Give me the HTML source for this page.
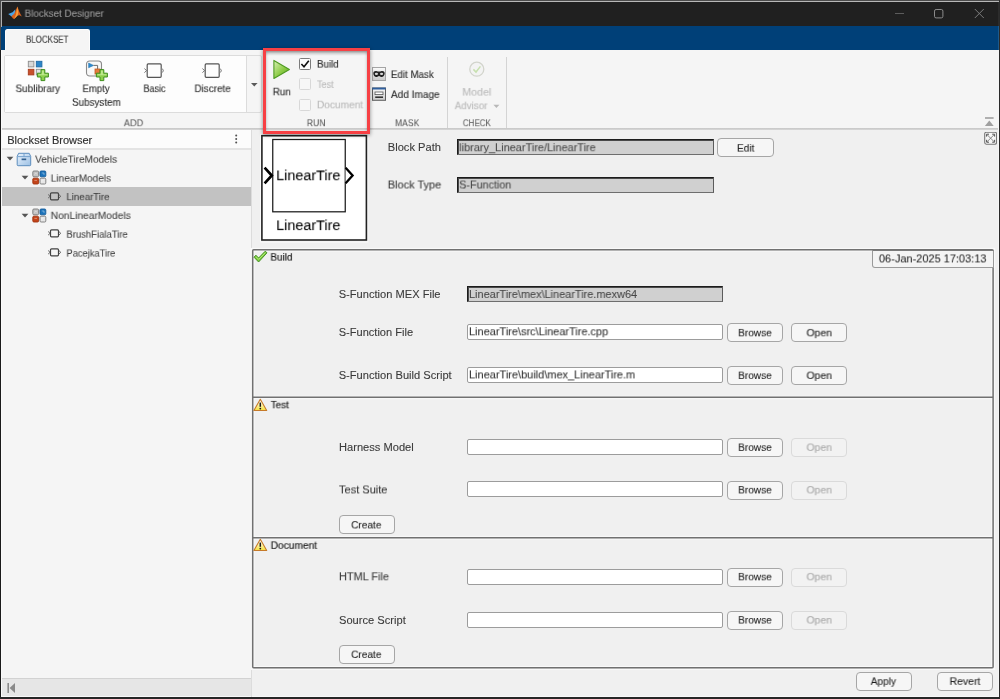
<!DOCTYPE html>
<html lang="en">
<head>
<meta charset="utf-8">
<title>Blockset Designer</title>
<style>
*{box-sizing:border-box;margin:0;padding:0}
html,body{width:1000px;height:699px;overflow:hidden;background:#f0f0f0}
body{font-family:"Liberation Sans",sans-serif;font-size:11px;color:#212121;position:relative}
#win{position:absolute;left:0;top:0;width:1000px;height:699px;overflow:hidden;background:#f0f0f0}
#win div,#win svg,#win span,#win button,#win label{position:absolute}
.x{white-space:nowrap;line-height:14px;height:14px;transform-origin:0 0;display:block;will-change:transform}
#title{left:0;top:0;width:1000px;height:26px;background:#202020}
#band{left:0;top:26px;width:1000px;height:24px;background:#004078}
#tab{left:5px;top:29px;width:85px;height:22px;background:#f5f5f5;border-radius:2.5px 2.5px 0 0;border:1px solid #fdfdfd;border-bottom:0}
#strip{left:0;top:50px;width:1000px;height:79px;background:#f5f5f5}
#stripline{left:0;top:128px;width:1000px;height:2px;background:linear-gradient(#c6c6c6,#d8d8d8)}
.vsep{width:1px;background:#d4d4d4}
.cb{width:12px;height:12px;border:1px solid #7c7c7c;background:#fdfdfd;border-radius:1.5px}
.cb.off{border-color:#d8d8d8;background:#f7f7f7}
#left{left:2px;top:130px;width:249px;height:567px;background:#f5f5f5}
#lhead{left:2px;top:130px;width:249px;height:20px;background:#fcfcfc;border-bottom:2px solid #e4e4e4}
.fld{height:17px;background:#fff;border:1px solid #9c9c9c;border-radius:2px}
.fld.ro{background:#d0d0d0;border:1px solid #1c1c1c;border-right-color:#5c5c5c;border-bottom-color:#6e6e6e;border-radius:0;box-shadow:inset 1px 1px 0 #4a4a4a}
.btn{height:19px;width:56px;background:#f6f6f6;border:1px solid #a6a6a6;border-radius:4px;font:inherit}
.btn.off{border-color:#dadada;background:#f2f2f2}
.pan{border:1px solid #747474;border-left-width:2px;box-shadow:inset 1px 1px 0 #fafafa}
</style>
</head>
<body>
<div id="win">
  <!-- ===== TITLE BAR ===== -->
  <div id="title"></div>
  <svg style="left:8px;top:6px" width="16" height="14" viewBox="0 0 16 14">
    <path d="M0.2 8.0 L4.6 6.2 L7.4 3.2 L7 8.4 L3.6 10.4 Z" fill="#4aa3e6"/>
    <path d="M3.4 10.2 L6.2 7.8 L9.4 0.6 L11.4 6 L13.8 10.6 L11.6 9.2 L9.6 9.6 L6.2 13 L5 12.4 Z" fill="#d9601c"/>
    <path d="M9.4 0.6 L10.2 6.4 L9.6 9.6 L6.2 13 L8 8.4 Z" fill="#f7a13a"/>
  </svg>
  <svg style="left:890px;top:6px" width="100" height="16" viewBox="0 0 100 16">
    <path d="M5 7.5 H14" stroke="#5c5c5c" stroke-width="1" fill="none"/>
    <rect x="44.5" y="3.5" width="8.4" height="8.4" rx="1.6" stroke="#8c8c8c" stroke-width="1" fill="none"/>
    <path d="M84.8 3 L93.8 12 M93.8 3 L84.8 12" stroke="#7c7c7c" stroke-width="1" fill="none"/>
  </svg>
  <div id="band"></div>
  <div id="tab"></div>

  <!-- ===== TOOLSTRIP ===== -->
  <div id="strip"></div>
  <div id="stripline"></div>
  <!-- gallery -->
  <div style="left:4px;top:55px;width:258px;height:58px;border:1px solid #dcdcdc;border-radius:2px;background:#f5f5f5"></div>
  <div style="left:5px;top:56px;width:241px;height:56px;background:#fdfdfd"></div>
  <div class="vsep" style="left:246px;top:56px;height:56px;background:#dcdcdc"></div>
  <svg style="left:250px;top:82px" width="9" height="6" viewBox="0 0 9 6"><path d="M1 1.1 H7.6 L4.3 4.6 Z" fill="#5a5a5a"/></svg>

  <!-- Sublibrary icon -->
  <svg style="left:26px;top:59px" width="26" height="24" viewBox="0 0 26 24">
    <rect x="2.3" y="2.3" width="5.6" height="5.6" fill="#d9d9d9" stroke="#8c8c8c" stroke-width="0.9"/>
    <rect x="10.3" y="2.3" width="5.6" height="5.6" fill="#2d86c8" stroke="#1f6aa6" stroke-width="0.9"/>
    <rect x="2.3" y="10.3" width="5.6" height="5.6" fill="#c8502c" stroke="#a83c1c" stroke-width="0.9"/>
    <rect x="10.3" y="10.3" width="5.6" height="5.6" fill="#e4e4e4" stroke="#8c8c8c" stroke-width="0.9"/>
    <path d="M15 10.6 h3.8 v3.6 h3.6 v3.8 h-3.6 v3.6 h-3.8 v-3.6 h-3.6 v-3.8 h3.6 Z" fill="#8ed04e" stroke="#3f8f1e" stroke-width="1" stroke-linejoin="round"/>
    <path d="M15.9 11.6 h2 v3.6 h3.6 v1 h-9 v-1 h3.4 Z" fill="#c9ee9c" opacity="0.8"/>
  </svg>
  <!-- Empty subsystem icon -->
  <svg style="left:84px;top:59px" width="26" height="24" viewBox="0 0 26 24">
    <rect x="2.5" y="2" width="15" height="15" rx="3.2" fill="#f7f7f7" stroke="#8a8a8a" stroke-width="1.1"/>
    <path d="M4.6 4 L9.6 6.4 L4.6 8.8 Z" fill="#2e8bd0" stroke="#1d6eab" stroke-width="0.5"/>
    <path d="M9.6 6.4 H13.6 V10.4" stroke="#6c6c6c" stroke-width="1" fill="none"/>
    <rect x="11" y="10" width="5" height="5" fill="#e47a3c" stroke="#c05a22" stroke-width="0.8"/>
    <path d="M16 10.6 h3.8 v3.6 h3.6 v3.8 h-3.6 v3.6 h-3.8 v-3.6 h-3.6 v-3.8 h3.6 Z" fill="#8ed04e" stroke="#3f8f1e" stroke-width="1" stroke-linejoin="round"/>
    <path d="M16.9 11.6 h2 v3.6 h3.6 v1 h-9 v-1 h3.4 Z" fill="#c9ee9c" opacity="0.8"/>
  </svg>
  <!-- Basic -->
  <svg style="left:142px;top:61px" width="24" height="18" viewBox="0 0 24 18">
    <rect x="5.2" y="2.9" width="14" height="13.4" rx="1" fill="#fdfdfd" stroke="#555" stroke-width="1.2"/>
    <path d="M2.4 7.6 L4.6 9.6 L2.4 11.6" stroke="#666" stroke-width="0.9" fill="none"/>
    <path d="M19.8 7.6 L22 9.6 L19.8 11.6 Z" stroke="#777" stroke-width="0.8" fill="#fdfdfd"/>
  </svg>
  <!-- Discrete -->
  <svg style="left:200px;top:61px" width="24" height="18" viewBox="0 0 24 18">
    <rect x="5.2" y="2.9" width="14" height="13.4" rx="1" fill="#fdfdfd" stroke="#555" stroke-width="1.2"/>
    <path d="M2.4 7.6 L4.6 9.6 L2.4 11.6" stroke="#666" stroke-width="0.9" fill="none"/>
    <path d="M19.8 7.6 L22 9.6 L19.8 11.6 Z" stroke="#777" stroke-width="0.8" fill="#fdfdfd"/>
  </svg>

  <!-- RUN -->
  <svg style="left:271px;top:58px" width="22" height="24" viewBox="0 0 22 24">
    <defs><linearGradient id="gplay" x1="0" y1="0" x2="1" y2="1">
      <stop offset="0" stop-color="#d9f0b4"/><stop offset="0.55" stop-color="#8ccb45"/><stop offset="1" stop-color="#5da524"/></linearGradient></defs>
    <path d="M2.9 2.4 L18.4 11.4 L2.9 20.4 Z" fill="url(#gplay)" stroke="#4f9a22" stroke-width="1.1" stroke-linejoin="round"/>
  </svg>
  <div class="cb" style="left:299px;top:58px"></div>
  <svg style="left:299px;top:58px" width="12" height="12" viewBox="0 0 12 12"><path d="M2.4 6 L5 8.8 L9.8 2.8" stroke="#111" stroke-width="1.6" fill="none"/></svg>
  <div class="cb off" style="left:299px;top:78px"></div>
  <div class="cb off" style="left:299px;top:99px"></div>

  <!-- MASK -->
  <svg style="left:372px;top:67px" width="14" height="14" viewBox="0 0 14 14">
    <defs><linearGradient id="gm" x1="0" y1="0" x2="0" y2="1"><stop offset="0" stop-color="#fbfbfb"/><stop offset="1" stop-color="#c9c9c9"/></linearGradient></defs>
    <rect x="0.5" y="0.5" width="13" height="13" fill="url(#gm)" stroke="#a4a4a4" stroke-width="1"/>
    <path d="M1.3 6.3 C1.3 4.2 3.2 3.7 5 4.2 C6.3 4.6 7.7 4.6 9 4.2 C10.8 3.7 12.7 4.2 12.7 6.3 C12.7 8.6 11.2 10 9.7 10 C8.4 10 7.9 8.9 7 8.9 C6.1 8.9 5.6 10 4.3 10 C2.8 10 1.3 8.6 1.3 6.3 Z" fill="#222"/>
    <ellipse cx="4.4" cy="6.9" rx="1.6" ry="1.05" fill="#d8d8d8"/>
    <ellipse cx="9.6" cy="6.9" rx="1.6" ry="1.05" fill="#d8d8d8"/>
  </svg>
  <svg style="left:372px;top:87px" width="14" height="14" viewBox="0 0 14 14">
    <rect x="0.5" y="1" width="13" height="12.3" fill="url(#gm)" stroke="#5e5e5e" stroke-width="1"/>
    <rect x="0.3" y="0.6" width="13.4" height="1.9" fill="#2f5f9e"/>
    <rect x="3" y="5" width="8" height="2.6" fill="#fff" stroke="#555" stroke-width="0.8"/>
    <path d="M3.2 10.2 H11" stroke="#2a2a2a" stroke-width="1.5"/>
  </svg>
  <div class="vsep" style="left:447px;top:57px;height:71px"></div>

  <!-- CHECK -->
  <svg style="left:467px;top:60px" width="20" height="20" viewBox="0 0 20 20">
    <circle cx="9.8" cy="9.2" r="7" fill="#f3f3f3" stroke="#d2d4cc" stroke-width="1.3"/>
    <path d="M6.4 9.4 L9 12 L13.4 6.4" stroke="#c6e0ae" stroke-width="1.5" fill="none"/>
  </svg>
  <svg style="left:493px;top:104px" width="7" height="5" viewBox="0 0 7 5"><path d="M0.4 0.8 H6.4 L3.4 4 Z" fill="#b8b8b8"/></svg>
  <div class="vsep" style="left:506px;top:57px;height:71px"></div>
  <svg style="left:984px;top:116px" width="12" height="12" viewBox="0 0 12 12"><path d="M1 2 H9.6" stroke="#929292" stroke-width="1.4"/><path d="M5.3 4.4 L9.7 10 H0.9 Z" fill="#a0a0a0"/></svg>

  <!-- ===== LEFT PANEL ===== -->
  <div id="left"></div>
  <div id="lhead"></div>
  <svg style="left:233px;top:133px" width="6" height="12" viewBox="0 0 6 12"><circle cx="3.2" cy="2.6" r="1" fill="#505050"/><circle cx="3.2" cy="6" r="1" fill="#505050"/><circle cx="3.2" cy="9.4" r="1" fill="#505050"/></svg>
  <div style="left:2px;top:187px;width:249px;height:19px;background:#c2c2c2"></div>
  <!-- row 0 -->
  <svg style="left:6px;top:156px" width="8" height="6" viewBox="0 0 8 6"><path d="M0.6 0.8 H7.4 L4 4.6 Z" fill="#555"/></svg>
  <svg style="left:16px;top:152px" width="16" height="15" viewBox="0 0 16 15">
    <defs><linearGradient id="gpk" x1="0" y1="0" x2="1" y2="1"><stop offset="0" stop-color="#eaf3fc"/><stop offset="1" stop-color="#9cc0e4"/></linearGradient></defs>
    <path d="M2.6 1.3 H13.2 L14.7 4.4 V12.8 Q14.7 13.7 13.8 13.7 H2.1 Q1.2 13.7 1.2 12.8 V4.4 Z" fill="url(#gpk)" stroke="#5c8dbd" stroke-width="1"/>
    <path d="M1.4 4.6 H14.5 M8 1.4 V4.4" stroke="#6d9ccb" stroke-width="0.9"/>
    <rect x="5.6" y="6.5" width="4.6" height="1.7" fill="#34618f"/>
  </svg>
  <!-- row 1 -->
  <svg style="left:21px;top:175px" width="8" height="6" viewBox="0 0 8 6"><path d="M0.6 0.8 H7.4 L4 4.6 Z" fill="#555"/></svg>
  <svg style="left:32px;top:170px" width="15" height="15" viewBox="0 0 15 15">
    <rect x="0.8" y="1" width="5.8" height="5.8" rx="1.1" fill="#c4c4c4" stroke="#787878" stroke-width="0.9"/>
    <rect x="8" y="1" width="5.8" height="5.8" rx="1.1" fill="#1c74bc" stroke="#165c98" stroke-width="0.9"/>
    <rect x="0.8" y="8.2" width="5.8" height="5.8" rx="1.1" fill="#c4441a" stroke="#a03410" stroke-width="0.9"/>
    <rect x="8" y="8.2" width="5.8" height="5.8" rx="1.1" fill="#e6e6e6" stroke="#787878" stroke-width="0.9"/>
    <path d="M2.4 4.4 L3.8 3 L5 4.4 M9.8 3 h2.2 v2 M2.4 10.4 h2.6 M9.8 12.4 v-2.4 h2.2" stroke="#fff" stroke-width="0.7" fill="none" opacity="0.55"/>
  </svg>
  <!-- row 2 -->
  <svg style="left:47px;top:192px" width="15" height="9" viewBox="0 0 15 9">
    <rect x="3.5" y="0.9" width="8" height="6.9" rx="1" fill="none" stroke="#424242" stroke-width="1.2"/>
    <path d="M1.1 2.5 L3.1 4.3 L1.1 6.1" stroke="#5a5a5a" stroke-width="0.9" fill="none"/>
    <path d="M11.8 2.5 L13.8 4.3 L11.8 6.1" stroke="#5a5a5a" stroke-width="0.9" fill="none"/>
  </svg>
  <!-- row 3 -->
  <svg style="left:21px;top:213px" width="8" height="6" viewBox="0 0 8 6"><path d="M0.6 0.8 H7.4 L4 4.6 Z" fill="#555"/></svg>
  <svg style="left:32px;top:208px" width="15" height="15" viewBox="0 0 15 15">
    <rect x="0.8" y="1" width="5.8" height="5.8" rx="1.1" fill="#c4c4c4" stroke="#787878" stroke-width="0.9"/>
    <rect x="8" y="1" width="5.8" height="5.8" rx="1.1" fill="#1c74bc" stroke="#165c98" stroke-width="0.9"/>
    <rect x="0.8" y="8.2" width="5.8" height="5.8" rx="1.1" fill="#c4441a" stroke="#a03410" stroke-width="0.9"/>
    <rect x="8" y="8.2" width="5.8" height="5.8" rx="1.1" fill="#e6e6e6" stroke="#787878" stroke-width="0.9"/>
    <path d="M2.4 4.4 L3.8 3 L5 4.4 M9.8 3 h2.2 v2 M2.4 10.4 h2.6 M9.8 12.4 v-2.4 h2.2" stroke="#fff" stroke-width="0.7" fill="none" opacity="0.55"/>
  </svg>
  <!-- row 4 -->
  <svg style="left:47px;top:229px" width="15" height="9" viewBox="0 0 15 9">
    <rect x="3.5" y="0.9" width="8" height="6.9" rx="1" fill="none" stroke="#424242" stroke-width="1.2"/>
    <path d="M1.1 2.5 L3.1 4.3 L1.1 6.1" stroke="#5a5a5a" stroke-width="0.9" fill="none"/>
    <path d="M11.8 2.5 L13.8 4.3 L11.8 6.1" stroke="#5a5a5a" stroke-width="0.9" fill="none"/>
  </svg>
  <!-- row 5 -->
  <svg style="left:47px;top:248px" width="15" height="9" viewBox="0 0 15 9">
    <rect x="3.5" y="0.9" width="8" height="6.9" rx="1" fill="none" stroke="#424242" stroke-width="1.2"/>
    <path d="M1.1 2.5 L3.1 4.3 L1.1 6.1" stroke="#5a5a5a" stroke-width="0.9" fill="none"/>
    <path d="M11.8 2.5 L13.8 4.3 L11.8 6.1" stroke="#5a5a5a" stroke-width="0.9" fill="none"/>
  </svg>
  <!-- bottom strip -->
  <div style="left:2px;top:678px;width:249px;height:1px;background:#d2d2d2"></div>
  <div style="left:2px;top:679px;width:249px;height:17px;background:#e6e6e6"></div>
  <div style="left:2px;top:696px;width:996px;height:1px;background:#f8f8f8"></div>
  <svg style="left:6px;top:682px" width="12" height="12" viewBox="0 0 12 12"><path d="M2.2 1 V11" stroke="#8a8a8a" stroke-width="1.6"/><path d="M3.6 6 L9 1 V11 Z" fill="#8a8a8a"/></svg>

  <div style="left:251px;top:130px;width:1px;height:567px;background:#dcdcdc"></div>
  <!-- ===== MAIN PANEL ===== -->
  <!-- block preview -->
  <svg style="left:258px;top:132px" width="114" height="114" viewBox="0 0 114 114">
    <rect x="2.6" y="2.6" width="107.2" height="107.4" fill="none" stroke="#fbfbfb" stroke-width="1"/>
    <rect x="3.9" y="3.7" width="104.5" height="104.3" fill="#fff" stroke="#222" stroke-width="1.6"/>
    <rect x="14.75" y="7.5" width="72.5" height="72.3" fill="#fff" stroke="#1c1c1c" stroke-width="1.25"/>
    <path d="M6.6 35.6 L13.8 43.5 L6.6 51.4" stroke="#000" stroke-width="2.7" fill="none"/>
    <path d="M87.6 35.8 L94.6 43.5 L87.6 51.2" stroke="#000" stroke-width="2.3" fill="#fff" stroke-linejoin="miter"/>
  </svg>
  <div class="fld ro" style="left:457px;top:139px;width:257px;height:16px"></div>
  <button class="btn" style="left:717px;top:138px;width:57px"></button>
  <div class="fld ro" style="left:457px;top:177px;width:257px;height:16px"></div>
  <!-- expand icon -->
  <svg style="left:984px;top:132px" width="13" height="13" viewBox="0 0 13 13">
    <rect x="0.7" y="0.2" width="11.8" height="12" rx="1.6" fill="#f6f6f6" stroke="#777" stroke-width="1.1"/>
    <path d="M2.6 4.6 V2.2 H5 M8.2 2.2 H10.6 V4.6 M10.6 7.8 V10.2 H8.2 M5 10.2 H2.6 V7.8" stroke="#505050" stroke-width="1" fill="none"/>
    <path d="M2.8 2.4 L10.4 10 M10.4 2.4 L2.8 10" stroke="#7a7a7a" stroke-width="0.9"/>
  </svg>

  <!-- Build panel -->
  <svg style="left:0;top:0" width="1000" height="699" viewBox="0 0 1000 699">
    <g fill="none">
      <rect x="251.4" y="248.4" width="743.2" height="421" stroke="#fafafa" stroke-width="1"/>
      <rect x="254" y="251" width="737.8" height="145.2" stroke="#f9f9f9" stroke-width="1"/>
      <rect x="254" y="398.8" width="737.8" height="137.6" stroke="#f9f9f9" stroke-width="1"/>
      <rect x="254" y="539.1" width="737.8" height="127.4" stroke="#f9f9f9" stroke-width="1"/>
      <rect x="252.7" y="249.75" width="740.4" height="417.9" rx="1" stroke="#717171" stroke-width="1.5"/>
      <path d="M253 397.25 H993 M253 537.75 H993" stroke="#717171" stroke-width="1.3"/>
    </g>
  </svg>
  <svg style="left:253px;top:250px" width="15" height="13" viewBox="0 0 15 13">
    <path d="M1 7.2 L2.9 5.2 L5.6 8 L12.2 1.2 L14 2.8 L5.6 12 Z" fill="#7ccb3e" stroke="#3c8a1c" stroke-width="0.9" stroke-linejoin="round"/>
    <path d="M3 6.8 L5.6 9.4 L12.4 2.6" fill="none" stroke="#b6ec7a" stroke-width="0.9"/>
  </svg>
  <div style="left:872px;top:250px;width:122px;height:18px;border:1px solid #9a9a9a;border-top-color:#7a7a7a;border-radius:0 0 0 3px;background:#f4f4f4"></div>
  <div class="fld ro" style="left:467px;top:286px;width:256px;height:16px"></div>
  <div class="fld" style="left:467px;top:324px;width:256px;height:16px"></div>
  <button class="btn" style="left:727px;top:323px"></button>
  <button class="btn" style="left:791px;top:323px"></button>
  <div class="fld" style="left:467px;top:367px;width:256px;height:16px"></div>
  <button class="btn" style="left:727px;top:366px"></button>
  <button class="btn" style="left:791px;top:366px"></button>

  <!-- Test panel -->
  <svg style="left:253px;top:398px" width="15" height="14" viewBox="0 0 15 14">
    <defs><linearGradient id="gw" x1="0" y1="0" x2="0" y2="1"><stop offset="0.2" stop-color="#fffbe6"/><stop offset="1" stop-color="#f6e23a"/></linearGradient></defs>
    <path d="M7.3 1.3 L13.7 12.5 H0.9 Z" fill="url(#gw)" stroke="#c67a2a" stroke-width="1.1" stroke-linejoin="round"/>
    <path d="M7.3 4.6 V8.8" stroke="#1a1a1a" stroke-width="1.5"/><circle cx="7.3" cy="10.6" r="0.9" fill="#1a1a1a"/>
  </svg>
  <div class="fld" style="left:467px;top:439px;width:256px;height:16px"></div>
  <button class="btn" style="left:727px;top:438px"></button>
  <button class="btn off" style="left:791px;top:438px"></button>
  <div class="fld" style="left:467px;top:481px;width:256px;height:16px"></div>
  <button class="btn" style="left:727px;top:481px"></button>
  <button class="btn off" style="left:791px;top:481px"></button>
  <button class="btn" style="left:339px;top:515px"></button>

  <!-- Document panel -->
  <svg style="left:253px;top:538px" width="15" height="14" viewBox="0 0 15 14">
    <defs><linearGradient id="gw" x1="0" y1="0" x2="0" y2="1"><stop offset="0.2" stop-color="#fffbe6"/><stop offset="1" stop-color="#f6e23a"/></linearGradient></defs>
    <path d="M7.3 1.3 L13.7 12.5 H0.9 Z" fill="url(#gw)" stroke="#c67a2a" stroke-width="1.1" stroke-linejoin="round"/>
    <path d="M7.3 4.6 V8.8" stroke="#1a1a1a" stroke-width="1.5"/><circle cx="7.3" cy="10.6" r="0.9" fill="#1a1a1a"/>
  </svg>
  <div class="fld" style="left:467px;top:569px;width:256px;height:16px"></div>
  <button class="btn" style="left:727px;top:568px"></button>
  <button class="btn off" style="left:791px;top:568px"></button>
  <div class="fld" style="left:467px;top:612px;width:256px;height:16px"></div>
  <button class="btn" style="left:727px;top:611px"></button>
  <button class="btn off" style="left:791px;top:611px"></button>
  <button class="btn" style="left:339px;top:645px"></button>

  <button class="btn" style="left:856px;top:672px"></button>
  <button class="btn" style="left:937px;top:672px"></button>

  <!-- ===== TEXT ===== -->
  <span class="x" id="t0" style="left:24px;top:7px;font-size:10.0px;color:#9c9c9c;-webkit-text-stroke:0.1px #9c9c9c;transform:translate(0.60px,0.80px) scale(0.9833,0.9)">Blockset Designer</span>
  <span class="x" id="t1" style="left:26px;top:33px;font-size:10.0px;color:#383838;-webkit-text-stroke:0.15px #383838;transform:translate(0.00px,0.80px) scale(0.7945,0.9)">BLOCKSET</span>
  <span class="x" id="t2" style="left:15px;top:82px;font-size:10.2px;color:#2c2c2c;-webkit-text-stroke:0.12px #2c2c2c;transform:translate(0.50px,0.60px) scale(0.9728,0.95)">Sublibrary</span>
  <span class="x" id="t3" style="left:82px;top:82px;font-size:10.2px;color:#2c2c2c;-webkit-text-stroke:0.12px #2c2c2c;transform:translate(0.50px,0.60px) scale(0.9403,0.95)">Empty</span>
  <span class="x" id="t4" style="left:72px;top:96px;font-size:10.2px;color:#2c2c2c;-webkit-text-stroke:0.12px #2c2c2c;transform:translate(0.00px,0.30px) scale(0.9659,0.95)">Subsystem</span>
  <span class="x" id="t5" style="left:143px;top:82px;font-size:10.2px;color:#2c2c2c;-webkit-text-stroke:0.12px #2c2c2c;transform:translate(0.50px,0.60px) scale(0.8865,0.95)">Basic</span>
  <span class="x" id="t6" style="left:194px;top:82px;font-size:10.2px;color:#2c2c2c;-webkit-text-stroke:0.12px #2c2c2c;transform:translate(0.50px,0.60px) scale(0.9683,0.95)">Discrete</span>
  <span class="x" id="t7" style="left:272px;top:85px;font-size:10.2px;color:#2c2c2c;-webkit-text-stroke:0.12px #2c2c2c;transform:translate(0.80px,0.80px) scale(0.9654,0.95)">Run</span>
  <span class="x" id="t8" style="left:317px;top:58px;font-size:10.2px;color:#2c2c2c;-webkit-text-stroke:0.12px #2c2c2c;transform:translate(0.00px,0.10px) scale(0.9570,0.95)">Build</span>
  <span class="x" id="t9" style="left:317px;top:78px;font-size:10.2px;color:#bababa;-webkit-text-stroke:0.12px #bababa;transform:translate(0.00px,0.50px) scale(0.8965,0.95)">Test</span>
  <span class="x" id="t10" style="left:317px;top:98px;font-size:10.2px;color:#bababa;-webkit-text-stroke:0.12px #bababa;transform:translate(0.00px,0.80px) scale(0.9914,0.95)">Document</span>
  <span class="x" id="t11" style="left:390px;top:68px;font-size:10.2px;color:#2c2c2c;-webkit-text-stroke:0.12px #2c2c2c;transform:translate(0.90px,0.50px) scale(0.9577,0.95)">Edit Mask</span>
  <span class="x" id="t12" style="left:390px;top:88px;font-size:10.2px;color:#2c2c2c;-webkit-text-stroke:0.12px #2c2c2c;transform:translate(0.90px,0.50px) scale(0.9898,0.95)">Add Image</span>
  <span class="x" id="t13" style="left:462px;top:86px;font-size:10.2px;color:#bababa;-webkit-text-stroke:0.12px #bababa;transform:translate(0.40px,0.10px) scale(1.0406,0.95)">Model</span>
  <span class="x" id="t14" style="left:454px;top:99px;font-size:10.2px;color:#bababa;-webkit-text-stroke:0.12px #bababa;transform:translate(0.70px,0.70px) scale(0.9631,0.95)">Advisor</span>
  <span class="x" id="t15" style="left:123px;top:117px;font-size:10.0px;color:#606060;-webkit-text-stroke:0.1px #606060;transform:translate(0.80px,0.60px) scale(0.9190,0.86)">ADD</span>
  <span class="x" id="t16" style="left:306px;top:117px;font-size:10.0px;color:#606060;-webkit-text-stroke:0.1px #606060;transform:translate(0.80px,0.60px) scale(0.8627,0.86)">RUN</span>
  <span class="x" id="t17" style="left:395px;top:117px;font-size:10.0px;color:#606060;-webkit-text-stroke:0.1px #606060;transform:translate(0.00px,0.60px) scale(0.8580,0.86)">MASK</span>
  <span class="x" id="t18" style="left:462px;top:117px;font-size:10.0px;color:#606060;-webkit-text-stroke:0.1px #606060;transform:translate(0.80px,0.60px) scale(0.8037,0.86)">CHECK</span>
  <span class="x" id="t19" style="left:7px;top:132px;font-size:11.0px;color:#2e2e2e;-webkit-text-stroke:0.15px #2e2e2e;transform:translate(0.20px,0.90px) scale(1.0011,1.0)">Blockset Browser</span>
  <span class="x" id="t20" style="left:35px;top:153px;font-size:10.0px;color:#3e3e3e;-webkit-text-stroke:0.08px #3e3e3e;transform:translate(0.10px,0.70px) scale(1.0082,0.9)">VehicleTireModels</span>
  <span class="x" id="t21" style="left:50px;top:172px;font-size:10.0px;color:#3e3e3e;-webkit-text-stroke:0.08px #3e3e3e;transform:translate(0.70px,0.60px) scale(1.0028,0.9)">LinearModels</span>
  <span class="x" id="t22" style="left:66px;top:191px;font-size:10.0px;color:#3e3e3e;-webkit-text-stroke:0.08px #3e3e3e;transform:translate(0.40px,0.20px) scale(0.9670,0.9)">LinearTire</span>
  <span class="x" id="t23" style="left:50px;top:209px;font-size:10.0px;color:#3e3e3e;-webkit-text-stroke:0.08px #3e3e3e;transform:translate(0.70px,0.90px) scale(1.0207,0.9)">NonLinearModels</span>
  <span class="x" id="t24" style="left:66px;top:228px;font-size:10.0px;color:#3e3e3e;-webkit-text-stroke:0.08px #3e3e3e;transform:translate(0.40px,0.70px) scale(0.9495,0.9)">BrushFialaTire</span>
  <span class="x" id="t25" style="left:66px;top:247px;font-size:10.0px;color:#3e3e3e;-webkit-text-stroke:0.08px #3e3e3e;transform:translate(0.40px,0.60px) scale(0.9345,0.9)">PacejkaTire</span>
  <span class="x" id="t26" style="left:276px;top:168px;font-size:14.0px;color:#000;-webkit-text-stroke:0.05px #000;transform:translate(0.17px,0.56px) scale(1.0272,0.97)">LinearTire</span>
  <span class="x" id="t27" style="left:276px;top:218px;font-size:14.0px;color:#000;-webkit-text-stroke:0.05px #000;transform:translate(0.17px,0.46px) scale(1.0272,0.97)">LinearTire</span>
  <span class="x" id="t28" style="left:387px;top:140px;font-size:11.05px;color:#3a3a3a;-webkit-text-stroke:0.1px #3a3a3a;transform:translate(0.80px,0.40px) scale(1.0064,1.0)">Block Path</span>
  <span class="x" id="t29" style="left:387px;top:177px;font-size:11.05px;color:#3a3a3a;-webkit-text-stroke:0.1px #3a3a3a;transform:translate(0.80px,0.50px) scale(0.9910,1.0)">Block Type</span>
  <span class="x" id="t30" style="left:459px;top:140px;font-size:11.0px;color:#484848;-webkit-text-stroke:0.08px #484848;transform:translate(0.20px,0.20px) scale(0.9939,1.0)">library_LinearTire/LinearTire</span>
  <span class="x" id="t31" style="left:459px;top:177px;font-size:11.0px;color:#484848;-webkit-text-stroke:0.08px #484848;transform:translate(0.20px,0.50px) scale(0.9798,1.0)">S-Function</span>
  <span class="x" id="t32" style="left:737px;top:142px;font-size:10.2px;color:#1c1c1c;-webkit-text-stroke:0.1px #1c1c1c;transform:translate(0.00px,0.30px) scale(0.9817,0.93)">Edit</span>
  <span class="x" id="t33" style="left:270px;top:251px;font-size:10.2px;color:#161616;-webkit-text-stroke:0.15px #161616;transform:translate(0.50px,0.30px) scale(0.9657,0.93)">Build</span>
  <span class="x" id="t34" style="left:878px;top:251px;font-size:11.0px;color:#222;-webkit-text-stroke:0.05px #222;transform:translate(0.90px,0.40px) scale(0.9988,1.0)">06-Jan-2025 17:03:13</span>
  <span class="x" id="t35" style="left:338px;top:287px;font-size:11.05px;color:#3a3a3a;-webkit-text-stroke:0.1px #3a3a3a;transform:translate(0.70px,0.30px) scale(1.0054,1.0)">S-Function MEX File</span>
  <span class="x" id="t36" style="left:469px;top:287px;font-size:11.0px;color:#484848;-webkit-text-stroke:0.08px #484848;transform:translate(0.00px,0.00px) scale(0.9940,1.0)">LinearTire\mex\LinearTire.mexw64</span>
  <span class="x" id="t37" style="left:338px;top:324px;font-size:11.05px;color:#3a3a3a;-webkit-text-stroke:0.1px #3a3a3a;transform:translate(0.70px,0.60px) scale(1.0008,1.0)">S-Function File</span>
  <span class="x" id="t38" style="left:469px;top:324px;font-size:11.0px;color:#303030;-webkit-text-stroke:0.08px #303030;transform:translate(0.00px,0.30px) scale(0.9952,1.0)">LinearTire\src\LinearTire.cpp</span>
  <span class="x" id="t39" style="left:738px;top:327px;font-size:10.2px;color:#1c1c1c;-webkit-text-stroke:0.1px #1c1c1c;transform:translate(0.20px,0.00px) scale(0.9882,0.93)">Browse</span>
  <span class="x" id="t40" style="left:806px;top:327px;font-size:10.2px;color:#1c1c1c;-webkit-text-stroke:0.1px #1c1c1c;transform:translate(0.50px,0.00px) scale(1.0224,0.93)">Open</span>
  <span class="x" id="t41" style="left:338px;top:367px;font-size:11.05px;color:#3a3a3a;-webkit-text-stroke:0.1px #3a3a3a;transform:translate(0.70px,0.80px) scale(1.0055,1.0)">S-Function Build Script</span>
  <span class="x" id="t42" style="left:469px;top:367px;font-size:11.0px;color:#303030;-webkit-text-stroke:0.08px #303030;transform:translate(0.00px,0.40px) scale(0.9968,1.0)">LinearTire\build\mex_LinearTire.m</span>
  <span class="x" id="t43" style="left:738px;top:369px;font-size:10.2px;color:#1c1c1c;-webkit-text-stroke:0.1px #1c1c1c;transform:translate(0.20px,0.70px) scale(0.9882,0.93)">Browse</span>
  <span class="x" id="t44" style="left:806px;top:369px;font-size:10.2px;color:#1c1c1c;-webkit-text-stroke:0.1px #1c1c1c;transform:translate(0.50px,0.70px) scale(1.0224,0.93)">Open</span>
  <span class="x" id="t45" style="left:270px;top:399px;font-size:10.2px;color:#161616;-webkit-text-stroke:0.15px #161616;transform:translate(0.70px,0.00px) scale(0.9760,0.93)">Test</span>
  <span class="x" id="t46" style="left:339px;top:439px;font-size:11.05px;color:#3a3a3a;-webkit-text-stroke:0.1px #3a3a3a;transform:translate(0.00px,0.90px) scale(1.0063,1.0)">Harness Model</span>
  <span class="x" id="t47" style="left:738px;top:441px;font-size:10.2px;color:#1c1c1c;-webkit-text-stroke:0.1px #1c1c1c;transform:translate(0.20px,0.60px) scale(0.9882,0.93)">Browse</span>
  <span class="x" id="t48" style="left:806px;top:441px;font-size:10.2px;color:#a8a8a8;-webkit-text-stroke:0.1px #a8a8a8;transform:translate(0.50px,0.60px) scale(1.0224,0.93)">Open</span>
  <span class="x" id="t49" style="left:339px;top:482px;font-size:11.05px;color:#3a3a3a;-webkit-text-stroke:0.1px #3a3a3a;transform:translate(0.00px,0.40px) scale(0.9987,1.0)">Test Suite</span>
  <span class="x" id="t50" style="left:738px;top:484px;font-size:10.2px;color:#1c1c1c;-webkit-text-stroke:0.1px #1c1c1c;transform:translate(0.20px,0.10px) scale(0.9882,0.93)">Browse</span>
  <span class="x" id="t51" style="left:806px;top:484px;font-size:10.2px;color:#a8a8a8;-webkit-text-stroke:0.1px #a8a8a8;transform:translate(0.50px,0.10px) scale(1.0224,0.93)">Open</span>
  <span class="x" id="t52" style="left:351px;top:519px;font-size:10.2px;color:#1c1c1c;-webkit-text-stroke:0.1px #1c1c1c;transform:translate(0.20px,0.10px) scale(0.9834,0.93)">Create</span>
  <span class="x" id="t53" style="left:270px;top:539px;font-size:10.2px;color:#161616;-webkit-text-stroke:0.15px #161616;transform:translate(0.70px,0.50px) scale(0.9978,0.93)">Document</span>
  <span class="x" id="t54" style="left:339px;top:569px;font-size:11.05px;color:#3a3a3a;-webkit-text-stroke:0.1px #3a3a3a;transform:translate(0.00px,0.30px) scale(0.9863,1.0)">HTML File</span>
  <span class="x" id="t55" style="left:738px;top:571px;font-size:10.2px;color:#1c1c1c;-webkit-text-stroke:0.1px #1c1c1c;transform:translate(0.20px,0.00px) scale(0.9882,0.93)">Browse</span>
  <span class="x" id="t56" style="left:806px;top:571px;font-size:10.2px;color:#a8a8a8;-webkit-text-stroke:0.1px #a8a8a8;transform:translate(0.50px,0.00px) scale(1.0224,0.93)">Open</span>
  <span class="x" id="t57" style="left:339px;top:612px;font-size:11.05px;color:#3a3a3a;-webkit-text-stroke:0.1px #3a3a3a;transform:translate(0.00px,0.50px) scale(1.0070,1.0)">Source Script</span>
  <span class="x" id="t58" style="left:738px;top:614px;font-size:10.2px;color:#1c1c1c;-webkit-text-stroke:0.1px #1c1c1c;transform:translate(0.20px,0.20px) scale(0.9882,0.93)">Browse</span>
  <span class="x" id="t59" style="left:806px;top:614px;font-size:10.2px;color:#a8a8a8;-webkit-text-stroke:0.1px #a8a8a8;transform:translate(0.50px,0.20px) scale(1.0224,0.93)">Open</span>
  <span class="x" id="t60" style="left:351px;top:648px;font-size:10.2px;color:#1c1c1c;-webkit-text-stroke:0.1px #1c1c1c;transform:translate(0.20px,0.70px) scale(0.9834,0.93)">Create</span>
  <span class="x" id="t61" style="left:870px;top:675px;font-size:10.2px;color:#1c1c1c;-webkit-text-stroke:0.1px #1c1c1c;transform:translate(0.70px,0.50px) scale(0.9890,0.93)">Apply</span>
  <span class="x" id="t62" style="left:949px;top:675px;font-size:10.2px;color:#1c1c1c;-webkit-text-stroke:0.1px #1c1c1c;transform:translate(0.60px,0.50px) scale(1.0240,0.93)">Revert</span>
  <!-- red highlight -->
  <div style="left:263px;top:48px;width:107px;height:86px;border:3px solid #f74044;box-shadow:0 1px 4px rgba(0,0,0,0.45), inset 0 1px 3px rgba(0,0,0,0.3)"></div>
  <div style="left:266px;top:51px;width:101px;height:5px;background:linear-gradient(rgba(0,0,0,0.2),rgba(0,0,0,0))"></div>
  <!-- window frame -->
  <div style="left:0;top:0;width:1000px;height:1px;background:#4c4c4c"></div>
  <div style="left:1px;top:1px;width:998px;height:1px;background:#b8b8b8"></div>
  <div style="left:0;top:0;width:1px;height:50px;background:#4a4a4a"></div>
  <div style="left:0;top:50px;width:1px;height:649px;background:#1a1a1a"></div>
  <div style="left:1px;top:1px;width:1px;height:26px;background:#b0b0b0"></div>
  <div style="left:1px;top:50px;width:1px;height:647px;background:#fafafa"></div>
  <div style="left:998px;top:2px;width:1px;height:24px;background:#2c2c2c"></div>
  <div style="left:998px;top:26px;width:1px;height:24px;background:#1c5a8c"></div>
  <div style="left:998px;top:50px;width:1px;height:647px;background:#f6f6f6"></div>
  <div style="left:999px;top:0;width:1px;height:699px;background:#2a2a2a"></div>
  <div style="left:0;top:697px;width:1000px;height:2px;background:#262626"></div>
</div>
</body>
</html>
